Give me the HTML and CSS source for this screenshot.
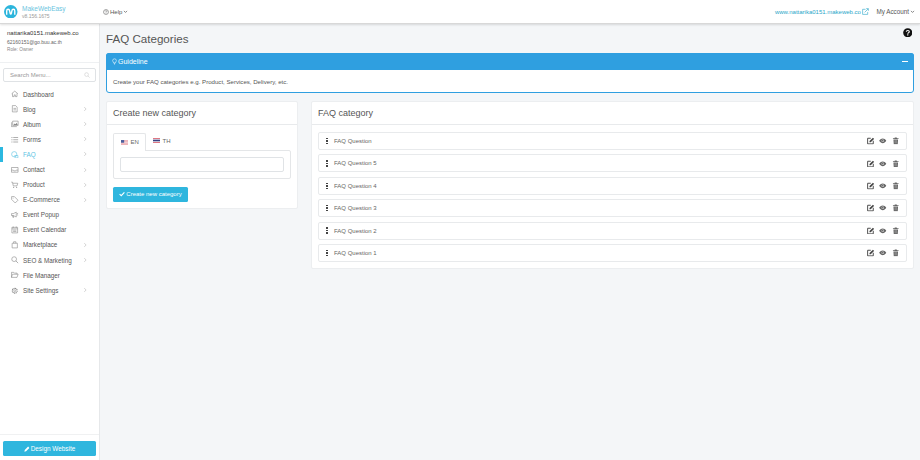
FILE: index.html
```html
<!DOCTYPE html>
<html lang="en">
<head>
<meta charset="utf-8">
<title>FAQ Categories</title>
<link rel="stylesheet" href="styles.css">
</head>
<body>
<svg class="defs" width="0" height="0">
  <symbol id="chev" viewBox="0 0 8 8"><path d="M3 1.500 5.500 4 3 6.500" fill="none" stroke="currentColor" stroke-width="1"/></symbol>
  <symbol id="edit" viewBox="0 0 12 12"><path d="M6 2H1v9h9V6" fill="none" stroke="#444" stroke-width="1.500"/><path d="M4 6.500 9.500 1 11.500 3 6 8.500H4z" fill="#444"/></symbol>
  <symbol id="eye" viewBox="0 0 12 12"><path d="M.2 6C2 3.300 4 2.200 6 2.200S10 3.300 11.800 6C10 8.700 8 9.800 6 9.800S2 8.700 .2 6z" fill="#666"/><circle cx="6" cy="6" r="2" fill="#ddd"/><circle cx="6" cy="6" r="1.200" fill="#555"/></symbol>
  <symbol id="trash" viewBox="0 0 12 12"><path d="M4.500 .8h3l.5 1h2.500v1.400h-9V1.800H4zM2.300 4h7.400l-.5 7.500H2.800z" fill="#666"/><path d="M4.600 5v5M6 5v5M7.400 5v5" stroke="#ccc" stroke-width=".5"/></symbol>
</svg>

<header class="topbar">
  <div class="brand">
    <svg class="logo" viewBox="0 0 14 14"><circle cx="7" cy="7" r="7" fill="#2cb5dc"/><path d="M2.800 10V6.300C2.800 3.800 5.600 3.800 5.900 6.300L6.300 8.300C6.600 9.800 7.400 9.800 7.700 8.300L8.100 6.300C8.400 3.800 11.200 3.800 11.200 6.300V10" fill="none" stroke="#fff" stroke-width="1.400"/></svg>
    <div class="brand-text">
      <div class="brand-name">MakeWebEasy</div>
      <div class="brand-ver">v8.156.1675</div>
    </div>
  </div>
  <div class="help">
    <svg class="help-ic" viewBox="0 0 8 8"><circle cx="4" cy="4" r="3.300" fill="none" stroke="currentColor" stroke-width=".7"/><path d="M2.900 3.100C3 2 5.100 2 5.100 3.100 5.100 3.900 4 3.900 4 4.800M4 5.400v.7" fill="none" stroke="currentColor" stroke-width=".7"/></svg>
    <span>Help</span>
    <svg class="down" viewBox="0 0 8 8"><path d="M1.500 3 4 5.500 6.500 3" fill="none" stroke="currentColor" stroke-width="1.100"/></svg>
  </div>
  <div class="top-right">
    <span class="site-link">www.nattarika0151.makeweb.co</span>
    <svg class="ext" viewBox="0 0 8 8"><path d="M4 1.500H.7v5.800h5.800V4.500" fill="none" stroke="currentColor" stroke-width=".7"/><path d="M3 5 7 1M4.800.7h2.500v2.500" fill="none" stroke="currentColor" stroke-width=".7"/></svg>
    <span class="account">My Account</span>
    <svg class="down" viewBox="0 0 8 8"><path d="M1.500 3 4 5.500 6.500 3" fill="none" stroke="currentColor" stroke-width="1.100"/></svg>
  </div>
</header>

<div class="body-row">
  <aside class="sidebar">
    <div class="user">
      <div class="user-site">nattarika0151.makeweb.co</div>
      <div class="user-mail">62160151@go.buu.ac.th</div>
      <div class="user-role">Role: Owner</div>
    </div>
    <div class="search">
      <span>Search Menu...</span>
      <svg class="search-ic" viewBox="0 0 8 8"><circle cx="3.400" cy="3.400" r="2.500" fill="none" stroke="currentColor" stroke-width=".8"/><path d="M5.200 5.200 7.500 7.500" stroke="currentColor" stroke-width=".8"/></svg>
    </div>
    <nav class="menu">
      <a class="item"><svg class="mi" viewBox="0 0 10 10"><path d="M.8 5 5 1.500 9.200 5M2 4.500V8.800h2.200V6.500h1.600v2.300H8V4.500" fill="none" stroke="currentColor" stroke-width=".8"/></svg><span class="label">Dashboard</span></a>
      <a class="item"><svg class="mi" viewBox="0 0 10 10"><path d="M1.800.8h4.400l2 2v6.400H1.800zM3.300 4.500h3.400M3.300 6.500h3.400" fill="none" stroke="currentColor" stroke-width=".8"/></svg><span class="label">Blog</span><svg class="chev"><use href="#chev"/></svg></a>
      <a class="item"><svg class="mi" viewBox="0 0 10 10"><path d="M2.200 1.500h7.300v5.800H2.200z" fill="none" stroke="currentColor" stroke-width=".8"/><path d="M.5 3v5.800h7.300" fill="none" stroke="currentColor" stroke-width=".8"/><path d="M3 6.500 5 4.500l1.300 1L7.500 3.500 9 6.500z" fill="currentColor"/></svg><span class="label">Album</span><svg class="chev"><use href="#chev"/></svg></a>
      <a class="item"><svg class="mi" viewBox="0 0 10 10"><path d="M.5 2h1.500M3 2h6.500M.5 5h1.500M3 5h6.500M.5 8h1.500M3 8h6.500" fill="none" stroke="currentColor" stroke-width=".9"/></svg><span class="label">Forms</span><svg class="chev"><use href="#chev"/></svg></a>
      <a class="item active"><svg class="mi" viewBox="0 0 10 10"><circle cx="4.300" cy="4.300" r="3.500" fill="none" stroke="currentColor" stroke-width=".8"/><path d="M5 6h4.200v3.200H5.500z" fill="none" stroke="currentColor" stroke-width=".8"/></svg><span class="label">FAQ</span><svg class="chev"><use href="#chev"/></svg></a>
      <a class="item"><svg class="mi" viewBox="0 0 10 10"><path d="M.6 2h8.800v6.300H.6zM.6 5.500h2.500l.7 1h2.400l.7-1h2.500" fill="none" stroke="currentColor" stroke-width=".8"/></svg><span class="label">Contact</span><svg class="chev"><use href="#chev"/></svg></a>
      <a class="item"><svg class="mi" viewBox="0 0 10 10"><path d="M.3 1.500h1.700l1 5h5l1-3.500H2.400" fill="none" stroke="currentColor" stroke-width=".8"/><circle cx="3.500" cy="8.300" r=".8" fill="currentColor"/><circle cx="7.500" cy="8.300" r=".8" fill="currentColor"/></svg><span class="label">Product</span><svg class="chev"><use href="#chev"/></svg></a>
      <a class="item"><svg class="mi" viewBox="0 0 10 10"><path d="M.8.800h3.700l4.800 4.800-3.700 3.700L.8 4.500z" fill="none" stroke="currentColor" stroke-width=".8"/><circle cx="2.800" cy="2.800" r=".6" fill="currentColor"/></svg><span class="label">E-Commerce</span><svg class="chev"><use href="#chev"/></svg></a>
      <a class="item"><svg class="mi" viewBox="0 0 10 10"><path d="M.6 3.500v2.500h2.400l4 2V1.500l-4 2zM2 6l.5 2.500h1L3.200 6M8 3.500 9.500 3M8 5l1.500.5" fill="none" stroke="currentColor" stroke-width=".8"/></svg><span class="label">Event Popup</span></a>
      <a class="item"><svg class="mi" viewBox="0 0 10 10"><path d="M1.200 1.800h7.600v7.400H1.200zM1.200 3.800h7.600M3 .6v2M7 .6v2M2.800 5.500h4.400M2.800 7.300h4.400" fill="none" stroke="currentColor" stroke-width=".8"/></svg><span class="label">Event Calendar</span></a>
      <a class="item"><svg class="mi" viewBox="0 0 10 10"><path d="M1.500 3h7v6.200h-7zM3.500 3V1h3v2" fill="none" stroke="currentColor" stroke-width=".8"/></svg><span class="label">Marketplace</span><svg class="chev"><use href="#chev"/></svg></a>
      <a class="item"><svg class="mi" viewBox="0 0 10 10"><circle cx="4.200" cy="4.200" r="3.200" fill="none" stroke="currentColor" stroke-width=".8"/><path d="M6.500 6.500 9.500 9.500" stroke="currentColor" stroke-width=".9"/></svg><span class="label">SEO &amp; Marketing</span><svg class="chev"><use href="#chev"/></svg></a>
      <a class="item"><svg class="mi" viewBox="0 0 10 10"><path d="M.6 8.500V1.800h3l1 1h3.500v1.500M.6 8.500h7.400l1.500-4.200H2z" fill="none" stroke="currentColor" stroke-width=".8"/></svg><span class="label">File Manager</span></a>
      <a class="item"><svg class="mi" viewBox="0 0 10 10"><circle cx="5" cy="5" r="3.200" fill="none" stroke="currentColor" stroke-width="1.500" stroke-dasharray="1.400 .6"/><circle cx="5" cy="5" r="1.300" fill="none" stroke="currentColor" stroke-width=".7"/></svg><span class="label">Site Settings</span><svg class="chev"><use href="#chev"/></svg></a>
    </nav>
    <div class="design-wrap">
      <button class="design-btn"><svg class="pencil" viewBox="0 0 8 8"><path d="M.5 7.500 1 5.300 5.500.8l1.700 1.700L2.700 7z" fill="currentColor"/></svg>Design Website</button>
    </div>
  </aside>

  <main class="main">
    <div class="title-row">
      <h1>FAQ Categories</h1>
      <svg class="qmark" viewBox="0 0 10 10"><circle cx="5" cy="5" r="4.800" fill="#111"/><path d="M3.400 3.900C3.500 2.200 6.700 2.200 6.700 3.900 6.700 5 5 5 5 6" fill="none" stroke="#fff" stroke-width="1.100"/><path d="M4.400 6.700h1.200v1.200H4.400z" fill="#fff"/></svg>
    </div>

    <section class="guide">
      <div class="guide-head">
        <svg class="bulb" viewBox="0 0 8 10"><path d="M4 .7A3 3 0 0 1 7 3.700C7 5.200 5.500 6 5.300 7.300H2.700C2.500 6 1 5.200 1 3.700A3 3 0 0 1 4 .7z" fill="none" stroke="currentColor" stroke-width=".9"/><path d="M2.900 8.300h2.200M3.300 9.400h1.400" stroke="currentColor" stroke-width=".8"/></svg>
        <span class="guide-title">Guideline</span>
        <span class="minus"></span>
      </div>
      <div class="guide-body">Create your FAQ categories e.g. Product, Services, Delivery, etc.</div>
    </section>

    <div class="columns">
      <section class="card card-left">
        <div class="card-head">Create new category</div>
        <div class="card-body">
          <div class="tabs">
            <div class="tab on">
              <svg class="flag" viewBox="0 0 10 7"><rect width="10" height="7" fill="#e8a0a8"/><path d="M0 1.500h10M0 3.500h10M0 5.500h10" stroke="#fff" stroke-width=".7"/><rect width="4.500" height="3.800" fill="#4a5f9e"/></svg>
              <span>EN</span>
            </div>
            <div class="tab">
              <svg class="flag" viewBox="0 0 10 7"><rect width="10" height="7" fill="#d9606e"/><rect y="1.200" width="10" height="4.600" fill="#fff"/><rect y="2.300" width="10" height="2.400" fill="#3a3f80"/></svg>
              <span>TH</span>
            </div>
          </div>
          <div class="tab-pane"><div class="field"></div></div>
          <button class="create-btn"><svg class="check" viewBox="0 0 8 8"><path d="M.8 4.200 3 6.300 7.200 1.700" fill="none" stroke="currentColor" stroke-width="1.500"/></svg>Create new category</button>
        </div>
      </section>

      <section class="card card-right">
        <div class="card-head">FAQ category</div>
        <div class="card-body rows">
          <div class="row"><span class="dots"><i></i><i></i><i></i></span><span class="q">FAQ Question</span><span class="acts"><svg class="act"><use href="#edit"/></svg><svg class="act"><use href="#eye"/></svg><svg class="act"><use href="#trash"/></svg></span></div>
          <div class="row"><span class="dots"><i></i><i></i><i></i></span><span class="q">FAQ Question 5</span><span class="acts"><svg class="act"><use href="#edit"/></svg><svg class="act"><use href="#eye"/></svg><svg class="act"><use href="#trash"/></svg></span></div>
          <div class="row"><span class="dots"><i></i><i></i><i></i></span><span class="q">FAQ Question 4</span><span class="acts"><svg class="act"><use href="#edit"/></svg><svg class="act"><use href="#eye"/></svg><svg class="act"><use href="#trash"/></svg></span></div>
          <div class="row"><span class="dots"><i></i><i></i><i></i></span><span class="q">FAQ Question 3</span><span class="acts"><svg class="act"><use href="#edit"/></svg><svg class="act"><use href="#eye"/></svg><svg class="act"><use href="#trash"/></svg></span></div>
          <div class="row"><span class="dots"><i></i><i></i><i></i></span><span class="q">FAQ Question 2</span><span class="acts"><svg class="act"><use href="#edit"/></svg><svg class="act"><use href="#eye"/></svg><svg class="act"><use href="#trash"/></svg></span></div>
          <div class="row"><span class="dots"><i></i><i></i><i></i></span><span class="q">FAQ Question 1</span><span class="acts"><svg class="act"><use href="#edit"/></svg><svg class="act"><use href="#eye"/></svg><svg class="act"><use href="#trash"/></svg></span></div>
        </div>
      </section>
    </div>
  </main>
</div>
</body>
</html>
```

FILE: styles.css
```css
* { box-sizing: border-box; }
html, body { margin: 0; height: 100%; }
body {
  width: 920px; height: 460px; overflow: hidden;
  font-family: "Liberation Sans", Arial, sans-serif;
  color: #555; background: #f4f6f8;
  display: flex; flex-direction: column;
}
.defs { position: absolute; }

.topbar {
  height: 24px; flex: none; display: flex; align-items: center;
  background: #fff; border-bottom: 1px solid #d8d8d8;
  box-shadow: 0 1px 2px rgba(0,0,0,.12);
  position: relative; z-index: 2;
}
.brand { width: 99px; display: flex; align-items: center; padding-left: 4px; gap: 4.500px; }
.logo { width: 13.500px; height: 13.500px; flex: none; }
.brand-name { font-size: 6.500px; line-height: 8px; color: #6cc5e0; }
.brand-ver { font-size: 5px; line-height: 6px; color: #999; }
.help { margin-left: 4px; display: flex; align-items: center; font-size: 6px; color: #555; gap: 1px; }
.help-ic { width: 6px; height: 6px; }
.down { width: 5px; height: 5px; }
.top-right { margin-left: auto; display: flex; align-items: center; padding-right: 5px; }
.site-link { font-size: 6px; color: #2aa6c9; }
.ext { width: 7px; height: 7px; color: #2aa6c9; margin-left: 1.500px; margin-right: 7px; }
.account { font-size: 6.300px; color: #555; margin-right: 1px; }

.body-row { flex: 1; display: flex; min-height: 0; }

.sidebar {
  width: 100px; flex: none; background: #fff;
  border-right: 1px solid #e6e8ea;
  display: flex; flex-direction: column;
}
.user { height: 39px; padding: 5.500px 0 0 7px; border-bottom: 1px solid #eef0f2; }
.user-site { font-size: 6px; line-height: 7px; color: #333; }
.user-mail { font-size: 5px; line-height: 7px; margin-top: 2px; color: #666; }
.user-role { font-size: 4.700px; line-height: 6px; margin-top: 1px; color: #888; }
.search {
  margin: 5px 3px 0; height: 14px; display: flex; align-items: center;
  justify-content: space-between; padding: 0 5px 0 6px;
  border: 1px solid #dfe2e5; border-radius: 2px;
  font-size: 6px; color: #999;
}
.search-ic { width: 6px; height: 6px; color: #ccc; }
.menu { margin-top: 4.500px; display: flex; flex-direction: column; flex: 1; }
.item {
  height: 15.100px; display: flex; align-items: center; padding: 0 11px 0 11px;
  font-size: 6.300px; color: #555; position: relative;
}
.item .label { flex: 1; margin-left: 4.500px; }
.mi { width: 7.500px; height: 7.500px; color: #888; flex: none; }
.chev { width: 6px; height: 6px; color: #c4c4c4; margin-right: 0; }
.item.active, .item.active .mi { color: #5cc3e3; }
.item.active::before {
  content: ""; position: absolute; left: 0; top: 0; bottom: 0; width: 2.500px; background: #2bb8e0;
}
.design-wrap { flex: none; border-top: 1px solid #f0f1f2; padding: 6px 3px 0; height: 26px; }
.design-btn {
  width: 93px; height: 15px; display: flex; align-items: center; justify-content: center; gap: 1px;
  border: 0; border-radius: 1.500px; background: #2fb6de; color: #fff;
  font: 6.400px "Liberation Sans", Arial, sans-serif; padding: 0;
}
.pencil { width: 6px; height: 6px; }

.main { flex: 1; min-width: 0; padding: 0 6px 0 6px; }
.title-row { height: 29px; display: flex; align-items: flex-start; justify-content: space-between; position: relative; }
h1 { margin: 6.500px 0 0; font-size: 11.600px; line-height: 16px; font-weight: 400; color: #555; }
.qmark { width: 9.500px; height: 9.500px; position: absolute; right: 2px; top: 3.500px; }

.guide { border: 1px solid #2f9fe0; border-radius: 3px; background: #fff; }
.guide-head {
  height: 17px; background: #2f9fe0; color: #fff; display: flex; align-items: center;
  padding: 0 6px 0 6px; font-size: 7px; margin: -1px -1px 0; border-radius: 3px 3px 0 0;
}
.bulb { width: 5px; height: 7px; margin-right: 1px; }
.guide-title { flex: 1; }
.minus { width: 6px; height: 1.500px; background: #fff; }
.guide-body { height: 22px; padding: 0 6px; display: flex; align-items: center; font-size: 6.100px; color: #555; }

.columns { margin-top: 8px; display: flex; align-items: flex-start; gap: 13px; }
.card { background: #fff; border: 1px solid #eceef0; border-radius: 2px; }
.card-left { width: 192px; flex: none; }
.card-right { flex: 1; min-width: 0; height: 168px; }
.card-head { height: 23px; display: flex; align-items: center; padding: 0 6px; font-size: 9px; color: #555; border-bottom: 1px solid #e8eaec; }
.card-left .card-body { padding: 6.500px 6px 6px; }
.tabs { display: flex; height: 18px; }
.tab { width: 33px; display: flex; align-items: center; padding-left: 6.500px; font-size: 6px; color: #666; gap: 3px; }
.tab.on { border: 1px solid #e4e6e8; border-bottom: 0; border-radius: 2px 2px 0 0; background: #fff; position: relative; top: 1px; z-index: 1; }
.flag { width: 7px; height: 5px; }
.tab-pane { height: 29px; border: 1px solid #e4e6e8; border-radius: 0 2px 2px 2px; padding: 6.500px 6px; }
.field { height: 15px; border: 1px solid #e0e3e6; border-radius: 2px; }
.create-btn {
  margin-top: 8px; width: 75px; height: 15px; display: flex; align-items: center; justify-content: center; gap: 1px;
  border: 0; border-radius: 1.500px; background: #2fb6de; color: #fff;
  font: 6px "Liberation Sans", Arial, sans-serif; padding: 0;
}
.check { width: 6px; height: 6px; }

.rows { padding: 7px 6px 0; display: flex; flex-direction: column; gap: 4.400px; }
.row {
  height: 18px; flex: none; border: 1px solid #e8eaec; border-radius: 2px;
  display: flex; align-items: center; padding: 0 7px 0 7px;
}
.dots { width: 2px; display: flex; flex-direction: column; gap: 1px; margin-right: 6px; }
.dots i { width: 1.500px; height: 1.500px; background: #444; display: block; }
.q { flex: 1; font-size: 6px; color: #666; }
.acts { display: flex; gap: 5px; color: #555; }
.act { width: 7.500px; height: 7.500px; }
```
